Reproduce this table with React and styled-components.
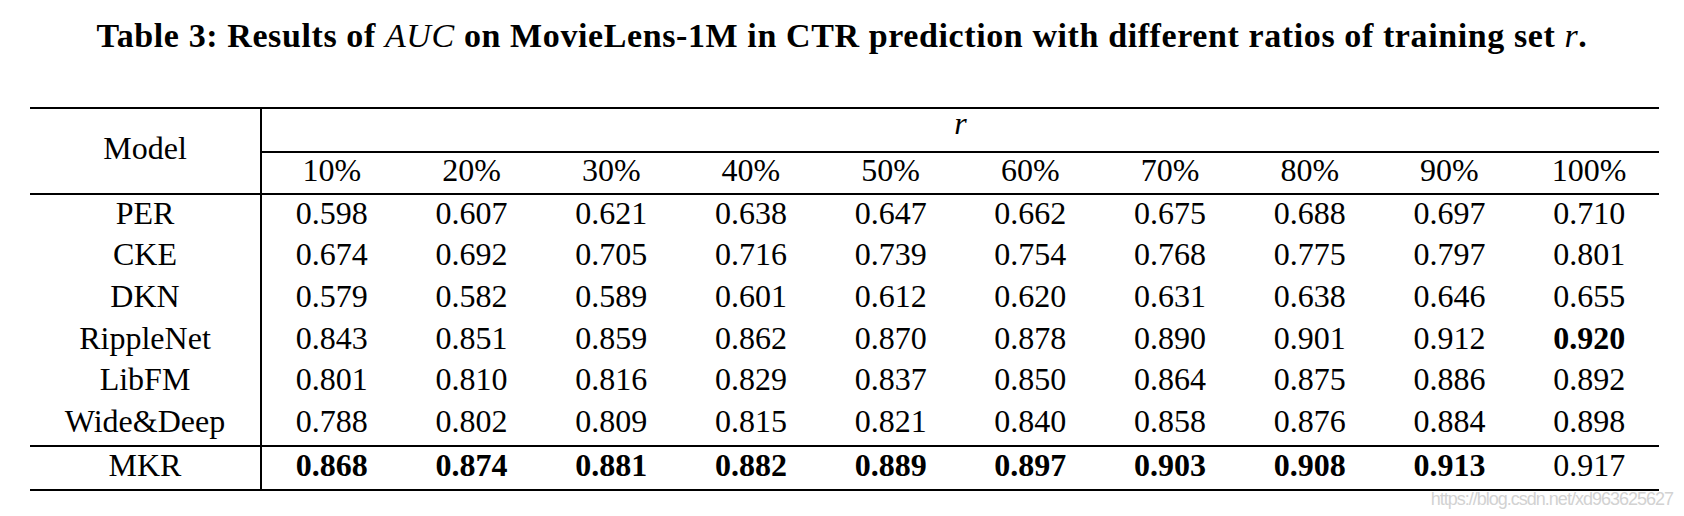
import React from 'react';
import styled, { createGlobalStyle } from 'styled-components';

const GlobalStyle = createGlobalStyle`
  html, body {
    margin: 0;
    padding: 0;
    background: #fff;
  }
  body {
    width: 1684px;
    height: 516px;
    overflow: hidden;
    font-family: "Liberation Serif", "Times New Roman", serif;
    color: #000;
  }
`;

const Page = styled.div`
  position: relative;
  width: 1684px;
  height: 516px;
  padding-top: 16px;
  box-sizing: border-box;
`;

const Caption = styled.div`
  text-align: center;
  font-size: 34px;
  line-height: 40px;
  font-weight: 700;
  letter-spacing: 0.6px;
  white-space: nowrap;
`;

const MathVar = styled.i`
  font-weight: 400;
`;

const Table = styled.div`
  display: grid;
  grid-template-columns: 232px repeat(10, 1fr);
  width: 1629px;
  margin: 51px 0 0 30px;
  border-top: 2px solid #000;
  border-bottom: 2px solid #000;
  font-size: 32px;
  line-height: 1;
`;

// 셀 공통: 가운데 정렬, 글자 시각 중심을 살짝 위로
const Cell = styled.div`
  display: flex;
  align-items: center;
  justify-content: center;
  box-sizing: border-box;
  height: ${(p) => p.$h || 41.67}px;
  padding-bottom: ${(p) => p.$lift ?? 6}px;
  font-weight: ${(p) => (p.$bold ? 700 : 400)};
  border-right: ${(p) => (p.$side ? '2px solid #000' : 'none')};
  border-top: ${(p) => (p.$ruleTop ? '2px solid #000' : 'none')};
  border-bottom: ${(p) => (p.$ruleBottom ? '2px solid #000' : 'none')};
  white-space: nowrap;
`;

const ModelHead = styled(Cell)`
  grid-row: span 2;
`;

const RatioHead = styled(Cell)`
  grid-column: span 10;
  font-style: italic;
`;

// 블로그 워터마크 (표 위에 겹침)
const Watermark = styled.div`
  position: absolute;
  right: 11px;
  bottom: 8px;
  font-family: "Liberation Sans", Arial, sans-serif;
  font-size: 18px;
  line-height: 18px;
  letter-spacing: -1px;
  color: #d2d2d2;
  white-space: nowrap;
`;

const ratios = ['10%', '20%', '30%', '40%', '50%', '60%', '70%', '80%', '90%', '100%'];

const rows = [
  { name: 'PER', values: ['0.598', '0.607', '0.621', '0.638', '0.647', '0.662', '0.675', '0.688', '0.697', '0.710'] },
  { name: 'CKE', values: ['0.674', '0.692', '0.705', '0.716', '0.739', '0.754', '0.768', '0.775', '0.797', '0.801'] },
  { name: 'DKN', values: ['0.579', '0.582', '0.589', '0.601', '0.612', '0.620', '0.631', '0.638', '0.646', '0.655'] },
  { name: 'RippleNet', values: ['0.843', '0.851', '0.859', '0.862', '0.870', '0.878', '0.890', '0.901', '0.912', '0.920'], bold: [9] },
  { name: 'LibFM', values: ['0.801', '0.810', '0.816', '0.829', '0.837', '0.850', '0.864', '0.875', '0.886', '0.892'] },
  { name: 'Wide&Deep', values: ['0.788', '0.802', '0.809', '0.815', '0.821', '0.840', '0.858', '0.876', '0.884', '0.898'] },
];

const mkr = {
  name: 'MKR',
  values: ['0.868', '0.874', '0.881', '0.882', '0.889', '0.897', '0.903', '0.908', '0.913', '0.917'],
  bold: [0, 1, 2, 3, 4, 5, 6, 7, 8],
};

const App = () => {
  return (
    <Page>
      <GlobalStyle />
      <Caption>
        Table 3: Results of <MathVar>AUC</MathVar> on MovieLens-1M in CTR prediction with different ratios of training set <MathVar>r</MathVar>.
      </Caption>

      <Table>
        <ModelHead $side $ruleBottom $h={86}>
          Model
        </ModelHead>
        <RatioHead $ruleBottom $h={44} $lift={14}>
          r
        </RatioHead>
        {ratios.map((r) => (
          <Cell key={r} $ruleBottom $h={42}>
            {r}
          </Cell>
        ))}

        {rows.map((row) => (
          <React.Fragment key={row.name}>
            <Cell $side>{row.name}</Cell>
            {row.values.map((v, i) => (
              <Cell key={i} $bold={row.bold && row.bold.includes(i)}>
                {v}
              </Cell>
            ))}
          </React.Fragment>
        ))}

        <Cell $side $ruleTop $h={44}>
          {mkr.name}
        </Cell>
        {mkr.values.map((v, i) => (
          <Cell key={i} $ruleTop $h={44} $bold={mkr.bold.includes(i)}>
            {v}
          </Cell>
        ))}
      </Table>

      <Watermark>https://blog.csdn.net/xd963625627</Watermark>
    </Page>
  );
};

export default App;
